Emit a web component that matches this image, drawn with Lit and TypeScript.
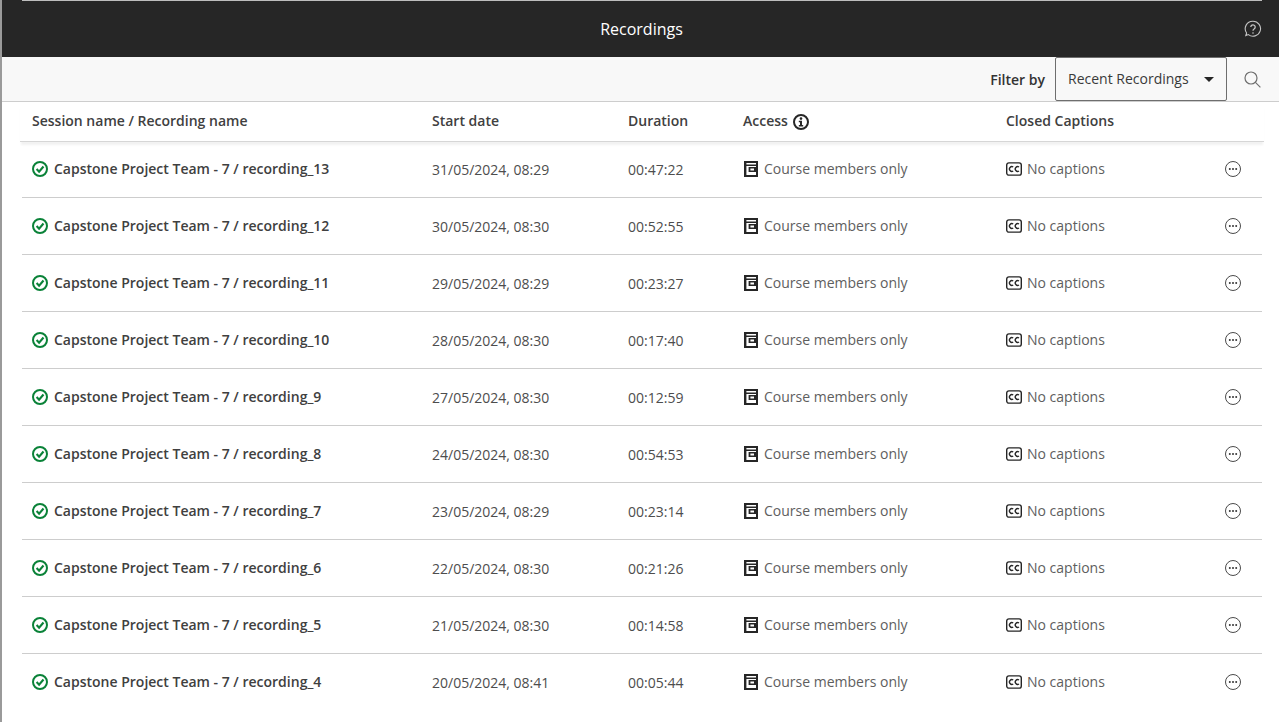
import { LitElement, html, css, svg } from 'lit';
import { customElement } from 'lit/decorators.js';

const rows = [
  ['recording_13', '31/05/2024, 08:29', '00:47:22'],
  ['recording_12', '30/05/2024, 08:30', '00:52:55'],
  ['recording_11', '29/05/2024, 08:29', '00:23:27'],
  ['recording_10', '28/05/2024, 08:30', '00:17:40'],
  ['recording_9', '27/05/2024, 08:30', '00:12:59'],
  ['recording_8', '24/05/2024, 08:30', '00:54:53'],
  ['recording_7', '23/05/2024, 08:29', '00:23:14'],
  ['recording_6', '22/05/2024, 08:30', '00:21:26'],
  ['recording_5', '21/05/2024, 08:30', '00:14:58'],
  ['recording_4', '20/05/2024, 08:41', '00:05:44'],
];

const checkIcon = html`<svg class="icon" width="16" height="16" viewBox="0 0 16 16" fill="none" stroke="#0a8238"><circle cx="8" cy="8" r="7" stroke-width="2"/><path d="M4.6 8l2.5 2.7 4.4-5.2" stroke-width="2.1"/></svg>`;
const courseIcon = html`<svg class="icon course" width="14" height="16" viewBox="0 0 14 16"><path fill="#262626" fill-rule="evenodd" d="M0 0h14v16H0zM2.4 2v12h9.6v-3H4.6V6H12V5H2.4V3.6H12V2zM6.4 7.6v1.8H10V7.6z"/></svg>`;
const ccIcon = html`<svg class="icon" width="16" height="14" viewBox="0 0 16 14" fill="none" stroke="#262626" stroke-width="1.4"><rect x="0.7" y="0.9" width="14.6" height="12.2" rx="2.2"/><path d="M7.2 5a2.4 2.4 0 1 0 0 4M13 5a2.4 2.4 0 1 0 0 4"/></svg>`;
const moreIcon = html`<svg class="icon" width="16" height="16" viewBox="0 0 16 16"><circle cx="8" cy="8" r="7.5" fill="none" stroke="#4a4a4a"/><circle cx="4.8" cy="8" r="1" fill="#333"/><circle cx="8" cy="8" r="1" fill="#333"/><circle cx="11.2" cy="8" r="1" fill="#333"/></svg>`;
const infoIcon = svg`<circle cx="8" cy="8" r="7" fill="none" stroke="#262626" stroke-width="2"/><circle cx="8" cy="4.6" r="1.3" fill="#262626"/><path d="M5.8 6.8h3.2v4.2h1.2v1.4H5.8V11H7V8.2H5.8z" fill="#262626"/>`;

@customElement('app-root')
export class AppRoot extends LitElement {
  static styles = css`
    :host {
      display: block;
      height: 722px;
      overflow: hidden;
      box-sizing: border-box;
      border-left: 2px solid #9a9a9a;
      background: #fff;
      color: #262626;
      font-family: 'Open Sans', sans-serif;
      font-size: 14px;
    }
    .icon {
      display: block;
      flex: none;
    }
    .top {
      display: flex;
      align-items: center;
      justify-content: center;
      position: relative;
      height: 57px;
      background: #262626;
      color: #fff;
      font-size: 16px;
      font-weight: 500;
    }
    /* pale strip along the very top edge, stops short of both corners */
    .top::before {
      content: '';
      position: absolute;
      top: 0;
      left: 20px;
      right: 17px;
      height: 1px;
      background: #bdbdbd;
    }
    .title {
      padding-left: 2px;
    }
    .help {
      position: absolute;
      right: 17px;
      top: 20px;
    }
    .toolbar {
      display: flex;
      justify-content: flex-end;
      align-items: flex-start;
      height: 45px;
      box-sizing: border-box;
      background: #f8f8f8;
      border-bottom: 1px solid #cdcdcd;
      padding-right: 18px;
    }
    .filter-label {
      font-weight: 600;
      color: #333;
      margin-right: 10px;
      margin-top: 13px;
    }
    .select {
      display: flex;
      align-items: center;
      justify-content: space-between;
      box-sizing: border-box;
      width: 172px;
      height: 44px;
      padding: 0 12px 0 12px;
      background: #f8f8f8;
      border: 1px solid #6e6e6e;
      border-radius: 2px;
      margin-right: 17px;
      color: #3a3a3a;
    }
    .select span {
      margin-top: -1px;
    }
    .caret {
      width: 0;
      height: 0;
      border-left: 5px solid transparent;
      border-right: 5px solid transparent;
      border-top: 5px solid #262626;
    }
    .search {
      margin-top: 14px;
    }
    .table {
      margin: 0 17px 0 20px;
    }
    .grid {
      display: grid;
      grid-template-columns: 400px 196px 115px 263px 1fr 37px;
      padding-left: 10px;
      align-items: center;
    }
    .head {
      height: 40px;
      box-sizing: border-box;
      margin: 0 -2px;
      padding-left: 12px;
      padding-right: 2px;
      font-weight: 600;
      color: #404040;
      border-bottom: 1px solid #d6d6d6;
      box-shadow: 0 4px 2px -1px #f2f2f2;
      position: relative;
      z-index: 1;
      background: #fff;
    }
    .head > div {
      margin-top: -3px;
    }
    .with-icon {
      display: flex;
      align-items: center;
      gap: 5px;
    }
    .with-icon .icon {
      margin-top: 3px;
    }
    .row {
      height: 57px;
      box-sizing: border-box;
      border-bottom: 1px solid #cdcdcd;
      color: #4d4d4d;
    }
    .head + .row {
      margin-top: -1px;
    }
    .row:last-child {
      border-bottom-color: transparent;
    }
    .name {
      display: flex;
      align-items: center;
      gap: 6px;
      font-weight: 600;
      color: #404040;
      margin-top: -1px;
    }
    .cell {
      display: flex;
      align-items: center;
      gap: 5px;
      margin-top: -1px;
    }
    .date {
      margin-top: 0;
    }
    .muted {
      color: #5e5e5e;
    }
    .course {
      margin-left: 1px;
      margin-right: 1px;
    }
  `;

  render() {
    return html`
      <div class="top">
        <div class="title">Recordings</div>
        <svg class="help icon" width="18" height="18" viewBox="0 0 18 18" fill="none" stroke="#c4c4c4" stroke-width="1.1">
          <path d="M9 1.2a7.5 7.5 0 1 1-4.6 13.4l-2.6.9.8-2.5A7.5 7.5 0 0 1 9 1.2z" />
          <path d="M6.8 7a2.2 2.2 0 1 1 3.3 2c-.8.5-1.1.9-1.1 1.8" stroke-width="1.3" />
          <circle cx="9" cy="13" r=".8" fill="#c4c4c4" stroke="none" />
        </svg>
      </div>
      <div class="toolbar">
        <span class="filter-label">Filter by</span>
        <div class="select"><span>Recent Recordings</span><i class="caret"></i></div>
        <svg class="icon search" width="17" height="17" viewBox="0 0 17 17" fill="none" stroke="#6e6e6e" stroke-width="1.2">
          <circle cx="7" cy="7" r="6" />
          <path d="M11.4 11.4l5 5" />
        </svg>
      </div>
      <div class="table">
        <div class="grid head">
          <div>Session name / Recording name</div>
          <div>Start date</div>
          <div>Duration</div>
          <div class="with-icon">Access <svg class="icon" width="16" height="16" viewBox="0 0 16 16">${infoIcon}</svg></div>
          <div>Closed Captions</div>
          <div></div>
        </div>
        ${rows.map(
          ([rec, date, dur]) => html`
            <div class="grid row">
              <div class="name">${checkIcon}<span>Capstone Project Team - 7 / ${rec}</span></div>
              <div class="cell date">${date}</div>
              <div class="cell date">${dur}</div>
              <div class="cell muted">${courseIcon}<span>Course members only</span></div>
              <div class="cell muted">${ccIcon}<span>No captions</span></div>
              <div class="cell">${moreIcon}</div>
            </div>
          `
        )}
      </div>
    `;
  }
}
